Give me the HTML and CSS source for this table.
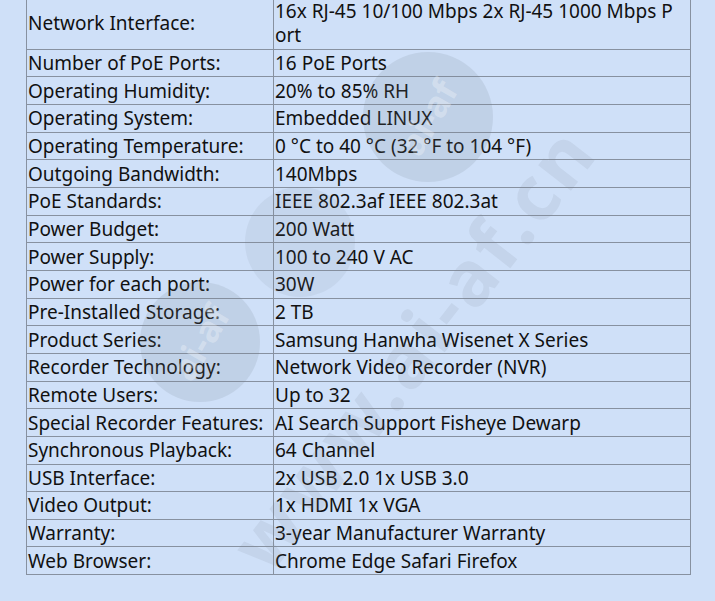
FILE: index.html
```html
<!DOCTYPE html>
<html>
<head>
<meta charset="utf-8">
<link rel="stylesheet" href="styles.css">
</head>
<body>
<div class="page">
  <table class="specs">
    <tr><td class="k">Network Interface:</td><td class="v">16x RJ-45 10/100 Mbps 2x RJ-45 1000 Mbps Port</td></tr>
    <tr><td class="k">Number of PoE Ports:</td><td class="v">16 PoE Ports</td></tr>
    <tr><td class="k">Operating Humidity:</td><td class="v">20% to 85% RH</td></tr>
    <tr><td class="k">Operating System:</td><td class="v">Embedded LINUX</td></tr>
    <tr><td class="k">Operating Temperature:</td><td class="v">0 °C to 40 °C (32 °F to 104 °F)</td></tr>
    <tr><td class="k">Outgoing Bandwidth:</td><td class="v">140Mbps</td></tr>
    <tr><td class="k">PoE Standards:</td><td class="v">IEEE 802.3af IEEE 802.3at</td></tr>
    <tr><td class="k">Power Budget:</td><td class="v">200 Watt</td></tr>
    <tr><td class="k">Power Supply:</td><td class="v">100 to 240 V AC</td></tr>
    <tr><td class="k">Power for each port:</td><td class="v">30W</td></tr>
    <tr><td class="k">Pre-Installed Storage:</td><td class="v">2 TB</td></tr>
    <tr><td class="k">Product Series:</td><td class="v">Samsung Hanwha Wisenet X Series</td></tr>
    <tr><td class="k">Recorder Technology:</td><td class="v">Network Video Recorder (NVR)</td></tr>
    <tr><td class="k">Remote Users:</td><td class="v">Up to 32</td></tr>
    <tr><td class="k">Special Recorder Features:</td><td class="v">AI Search Support Fisheye Dewarp</td></tr>
    <tr><td class="k">Synchronous Playback:</td><td class="v">64 Channel</td></tr>
    <tr><td class="k">USB Interface:</td><td class="v">2x USB 2.0 1x USB 3.0</td></tr>
    <tr><td class="k">Video Output:</td><td class="v">1x HDMI 1x VGA</td></tr>
    <tr><td class="k">Warranty:</td><td class="v">3-year Manufacturer Warranty</td></tr>
    <tr><td class="k">Web Browser:</td><td class="v">Chrome Edge Safari Firefox</td></tr>
  </table>
  <div class="wm wm-circle wm-c1"><span>ai-af</span></div>
  <div class="wm wm-circle wm-c2"><span>ai-af</span></div>
  <div class="wm wm-circle wm-c3"></div>
  <div class="wm wm-text">www.ai-af.cn</div>
</div>
</body>
</html>
```
FILE: styles.css
```css
html, body {
  margin: 0;
  padding: 0;
  background: #cfe0f8;
  overflow: hidden;
}
.page {
  position: relative;
  width: 715px;
  height: 601px;
  padding-left: 26px;
  box-sizing: border-box;
}
.specs {
  border-collapse: collapse;
  margin-top: -3px;
  font-family: "Noto Sans", "Noto Sans CJK SC", sans-serif;
  font-size: 19px;
  line-height: 24px;
  color: #111;
  width: 665px;
  table-layout: fixed;
}
.specs td {
  border: 1px solid #8791a0;
  padding: 1.34px 1px;
  vertical-align: middle;
  word-break: break-all;
}
.specs td.k { width: 244px; }
.specs td.v { padding-right: 8px; }
.wm {
  position: absolute;
  pointer-events: none;
}
.wm-circle {
  border-radius: 50%;
  background: rgba(120, 130, 145, 0.16);
  display: flex;
  align-items: center;
  justify-content: center;
}
.wm-circle span {
  font-family: "Noto Sans", sans-serif;
  font-weight: 700;
  font-size: 36px;
  color: rgba(255, 255, 255, 0.3);
  transform: rotate(-60deg);
}
.wm-c1 { left: 363px; top: 55px; width: 130px; height: 130px; }
.wm-c2 { left: 140px; top: 285px; width: 120px; height: 120px; }
.wm-c3 { left: 245px; top: 190px; width: 110px; height: 110px; background: rgba(120, 130, 145, 0.1); }
.wm-text {
  left: 122px;
  top: 312px;
  width: 580px;
  height: 76px;
  text-align: center;
  font-family: "Noto Sans", sans-serif;
  font-weight: 700;
  font-size: 76px;
  line-height: 76px;
  letter-spacing: 4px;
  color: rgba(120, 130, 145, 0.13);
  transform: rotate(-52deg);
  transform-origin: center center;
  white-space: nowrap;
}
```
